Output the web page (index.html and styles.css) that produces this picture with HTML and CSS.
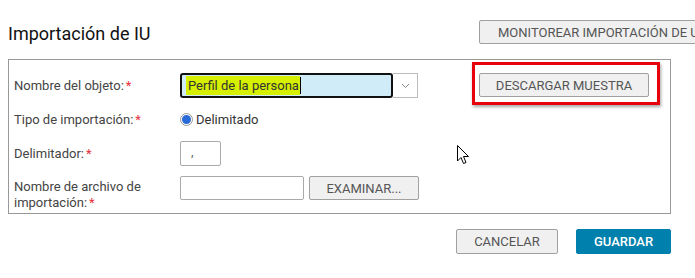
FILE: index.html
```html
<!DOCTYPE html>
<html lang="es">
<head>
    <meta charset="UTF-8">
    <title>Importación de IU</title>
    <link rel="stylesheet" href="styles.css">
</head>
<body>
    <div class="header">
        <h1 class="title">Importación de IU</h1>
        <button class="btn monitor-button">MONITOREAR IMPORTACIÓN DE UI</button>
    </div>
    <div class="panel">
        <div class="form">
            <div class="row row-object">
                <label class="label">Nombre del objeto:<span class="req">*</span></label>
                <div class="control">
                    <div class="select">
                        <div class="select-value"><span class="hl">Perfil de la persona</span><span class="caret"></span></div>
                        <div class="select-arrow">
                            <svg width="9" height="6" viewBox="0 0 9 6"><path d="M1 1 L4.5 4.5 L8 1" fill="none" stroke="#888" stroke-width="1"/></svg>
                        </div>
                    </div>
                </div>
            </div>
            <div class="row row-type">
                <label class="label">Tipo de importación:<span class="req">*</span></label>
                <div class="control">
                    <span class="radio"><span class="radio-dot"></span></span>
                    <span class="radio-text">Delimitado</span>
                </div>
            </div>
            <div class="row row-delim">
                <label class="label">Delimitador:<span class="req">*</span></label>
                <div class="control">
                    <div class="input input-small">,</div>
                </div>
            </div>
            <div class="row row-file">
                <label class="label label-wrap">Nombre de archivo de importación:<span class="req">*</span></label>
                <div class="control">
                    <div class="input input-file"></div>
                    <button class="btn browse-button">EXAMINAR...</button>
                </div>
            </div>
        </div>
        <div class="side">
            <div class="marked">
                <button class="btn sample-button">DESCARGAR MUESTRA</button>
            </div>
        </div>
    </div>
    <div class="actions">
        <button class="btn cancel-button">CANCELAR</button>
        <button class="btn save-button">GUARDAR</button>
    </div>
    <svg class="cursor" width="13" height="20" viewBox="0 0 13 20">
        <path d="M0.5 0.5 L0.5 16 L4 12.5 L6.5 18.5 L9 17.5 L6.5 11.5 L11.5 11.5 Z" fill="#fff" stroke="#000" stroke-width="1"/>
    </svg>
</body>
</html>
```

FILE: styles.css
```css
body {
    margin: 0;
    background-color: #fff;
    font-family: Roboto, "Liberation Sans", Arial, sans-serif;
    color: #444;
    overflow: hidden;
    width: 695px;
    height: 278px;
    position: relative;
}
.header {
    display: flex;
    align-items: flex-start;
    height: 59px;
    padding-left: 8px;
    box-sizing: border-box;
    white-space: nowrap;
    width: 740px;
}
.title {
    margin: 0;
    padding-top: 24px;
    font-size: 18px;
    font-weight: 400;
    line-height: 20px;
    color: #111;
    width: 471px;
    flex-shrink: 0;
}
.btn {
    font-family: Roboto, "Liberation Sans", Arial, sans-serif;
    font-size: 13px;
    color: #555;
    background-color: #f0f0f0;
    border: 1px solid #a0a0a0;
    border-radius: 2px;
    padding: 0;
    height: 24px;
    box-sizing: border-box;
    white-space: nowrap;
}
.monitor-button {
    margin-top: 20px;
    width: 240px;
    height: 24px;
    padding-left: 18px;
    text-align: left;
    flex-shrink: 0;
}
.panel {
    margin-left: 8px;
    width: 663px;
    height: 155px;
    border: 1px solid #999;
    box-sizing: border-box;
    display: flex;
    padding: 13px 0 0 5px;
}
.form {
    width: 410px;
    display: flex;
    flex-direction: column;
    gap: 10px;
}
.row {
    display: flex;
    align-items: center;
}
.row-object { height: 25px; }
.row-type { height: 23px; }
.row-delim { height: 25px; }
.row-file { height: 24px; align-items: flex-start; }
.label {
    width: 166px;
    font-size: 13px;
    color: #444;
    flex-shrink: 0;
}
.label-wrap {
    width: 130px;
    margin-right: 36px;
    line-height: 16px;
    padding-top: 3px;
}
.req {
    color: #e8303a;
    margin-left: 2px;
}
.control {
    display: flex;
    align-items: center;
    font-size: 13px;
}
.select {
    display: flex;
    height: 25px;
}
.select-value {
    width: 213px;
    height: 25px;
    box-sizing: border-box;
    border: 2px solid #111;
    border-radius: 3px;
    background-color: #d0ecf8;
    display: flex;
    align-items: center;
    padding-left: 4px;
}
.hl {
    background-color: #d6f000;
    color: #333;
    font-size: 13px;
    line-height: 19px;
    padding: 0 1px 0 2px;
}
.caret {
    width: 1px;
    height: 17px;
    background-color: #000;
}
.select-arrow {
    width: 25px;
    height: 25px;
    box-sizing: border-box;
    border: 1px solid #bbb;
    border-left: none;
    display: flex;
    align-items: center;
    justify-content: center;
}
.radio {
    width: 13px;
    height: 13px;
    border: 1px solid #999;
    border-radius: 50%;
    box-sizing: border-box;
    display: flex;
    align-items: center;
    justify-content: center;
    background-color: #fff;
}
.radio-dot {
    width: 9px;
    height: 9px;
    border-radius: 50%;
    background-color: #2a6ad8;
}
.radio-text {
    margin-left: 3px;
    color: #333;
}
.input {
    height: 25px;
    border: 1px solid #aaa;
    border-radius: 2px;
    box-sizing: border-box;
    background-color: #fff;
    color: #666;
    padding-left: 10px;
    line-height: 20px;
}
.input-small {
    width: 41px;
}
.input-file {
    width: 124px;
    height: 24px;
}
.browse-button {
    margin-left: 5px;
    width: 110px;
}
.side {
    padding-left: 55px;
}
.marked {
    position: relative;
}
.marked::before {
    content: "";
    position: absolute;
    left: -7px;
    top: -11px;
    width: 188px;
    height: 43px;
    border: 3px solid #e8000b;
    box-sizing: border-box;
    box-shadow: 1px 2px 3px rgba(0, 0, 0, 0.35);
    pointer-events: none;
}
.sample-button {
    width: 170px;
    height: 24px;
}
.actions {
    display: flex;
    gap: 18px;
    margin-top: 15px;
    padding-left: 456px;
}
.cancel-button {
    width: 102px;
    height: 25px;
}
.save-button {
    width: 95px;
    height: 25px;
    background-color: #0080ad;
    border-color: #0080ad;
    color: #fff;
    font-weight: 500;
}
.cursor {
    position: absolute;
    left: 457px;
    top: 145px;
}
```
